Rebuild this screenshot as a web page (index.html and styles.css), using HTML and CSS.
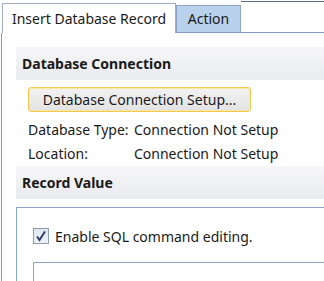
FILE: index.html
```html
<!DOCTYPE html>
<html lang="en">
<head>
  <meta charset="UTF-8" />
  <title>Insert Database Record</title>
  <link rel="stylesheet" href="styles.css">
</head>
<body>
  <div class="window">
    <div class="tabs">
      <div class="tab active">Insert Database Record</div>
      <div class="tab">Action</div>
      <div class="tab-rest"></div>
    </div>
    <div class="panel">
      <div class="section-header">Database Connection</div>
      <div class="section-body">
        <button class="setup-btn">Database Connection Setup...</button>
        <div class="info-row"><span class="label">Database Type:</span><span>Connection Not Setup</span></div>
        <div class="info-row"><span class="label">Location:</span><span>Connection Not Setup</span></div>
      </div>
      <div class="section-header">Record Value</div>
      <div class="group">
        <label class="check-row">
          <span class="checkbox">
            <svg width="12" height="12" viewBox="0 0 12 12"><path d="M2 6.5 L4.5 10 L10 1.5" fill="none" stroke="#2f3f6b" stroke-width="2"/></svg>
          </span>
          Enable SQL command editing.
        </label>
        <div class="sql-box"></div>
      </div>
    </div>
  </div>
</body>
</html>
```

FILE: styles.css
```css
body {
  margin: 0;
  background: #fff;
  font-family: "Noto Sans", sans-serif;
  font-size: 14px;
  color: #1a1a1a;
  overflow: hidden;
}
.window {
  width: 324px;
  height: 281px;
  overflow: hidden;
}
.tabs {
  display: flex;
  align-items: flex-end;
  height: 33px;
  padding-left: 2px;
}
.tab {
  box-sizing: border-box;
  width: 65px;
  height: 28px;
  line-height: 26px;
  text-align: center;
  background: #b9d1ea;
  border: 1px solid #8aa3c6;
  border-bottom-color: #7f9bc3;
  white-space: nowrap;
}
.tab.active {
  width: 174px;
  height: 30px;
  line-height: 30px;
  background: #fff;
  border-color: #a0aec4;
  border-bottom: none;
}
.tab-rest {
  flex: 1;
  box-sizing: border-box;
  align-self: flex-start;
  margin-top: 1px;
  height: 32px;
  border-top: 1px solid #5c6b85;
  border-bottom: 1px solid #7f9bc3;
}
.panel {
  border-left: 1px solid #7f9bc3;
  margin-left: 1px;
  padding-left: 14px;
  padding-top: 14px;
}
.section-header {
  height: 33px;
  line-height: 33px;
  padding-left: 6px;
  font-weight: bold;
  background: linear-gradient(#f6f6f8, #eaebef);
}
.section-body {
  padding: 7px 0 0 12px;
}
.setup-btn {
  box-sizing: border-box;
  width: 223px;
  height: 25px;
  font-family: inherit;
  font-size: 14px;
  color: #1a1a1a;
  background: linear-gradient(#f2f2f2, #e3e3e3);
  border: 1px solid #f2c94c;
  border-radius: 3px;
  box-shadow: inset 0 0 0 1px #f8e7a6;
  padding: 0;
  margin-bottom: 6px;
}
.info-row {
  display: flex;
  height: 24px;
  line-height: 24px;
  white-space: nowrap;
}
.label {
  flex-shrink: 0;
  width: 106px;
}
.group {
  margin-top: 8px;
  border: 1px solid #8aa3c6;
  border-right: none;
  padding: 20px 0 0 16px;
  height: 200px;
}
.check-row {
  display: flex;
  align-items: center;
  gap: 6px;
  height: 16px;
  white-space: nowrap;
}
.checkbox {
  box-sizing: border-box;
  width: 16px;
  height: 16px;
  border: 1px solid #8e9bb0;
  background: linear-gradient(#dfe6ee, #eef2f6);
  display: flex;
  align-items: center;
  justify-content: center;
}
.sql-box {
  margin-top: 18px;
  border: 1px solid #8aa3c6;
  border-right: none;
  height: 100px;
}
```
